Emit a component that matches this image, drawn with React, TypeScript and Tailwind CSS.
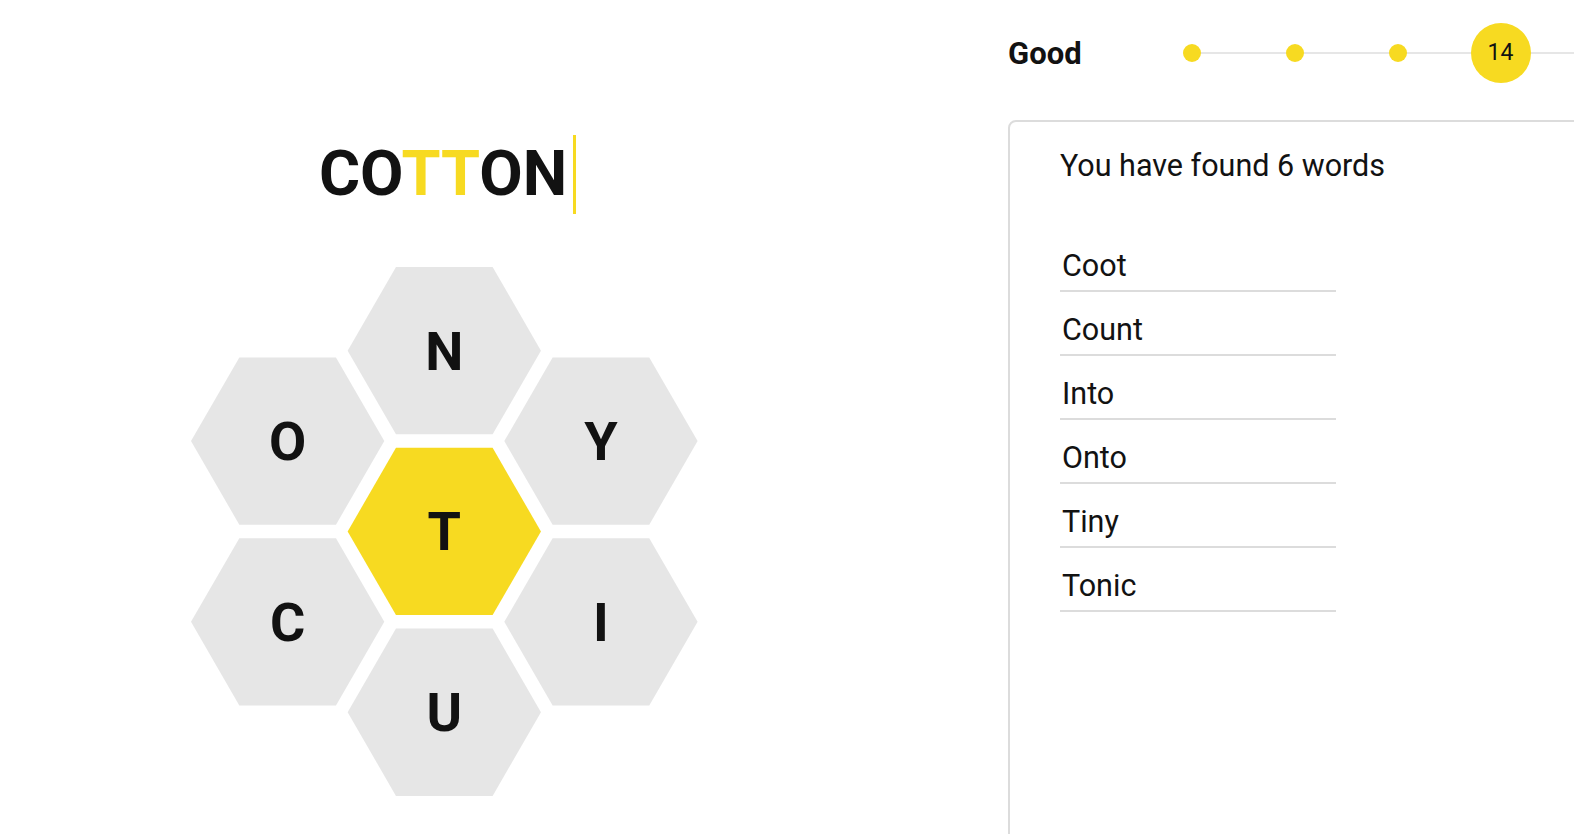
import React from "react";

const W = 193.3;
const H = 167.3;

type Cell = { letter: string; cx: number; cy: number; center?: boolean };

const cells: Cell[] = [
  { letter: "N", cx: 253.3, cy: 83.65 },
  { letter: "O", cx: 96.65, cy: 174.05 },
  { letter: "Y", cx: 409.95, cy: 174.05 },
  { letter: "T", cx: 253.3, cy: 264.45, center: true },
  { letter: "C", cx: 96.65, cy: 354.85 },
  { letter: "I", cx: 409.95, cy: 354.85 },
  { letter: "U", cx: 253.3, cy: 445.25 },
];

const words = ["Coot", "Count", "Into", "Onto", "Tiny", "Tonic"];

function hexPoints(cx: number, cy: number) {
  const pts = [
    [cx - W / 2, cy],
    [cx - W / 4, cy - H / 2],
    [cx + W / 4, cy - H / 2],
    [cx + W / 2, cy],
    [cx + W / 4, cy + H / 2],
    [cx - W / 4, cy + H / 2],
  ];
  return pts.map((p) => p.join(",")).join(" ");
}

function Hive() {
  return (
    <svg width="507" height="530" viewBox="0 0 507 530" className="block">
      {cells.map((c) => (
        <g key={c.letter}>
          <polygon points={hexPoints(c.cx, c.cy)} fill={c.center ? "#f7da21" : "#e6e6e6"} />
          <text
            x={c.cx}
            y={c.cy + 19}
            textAnchor="middle"
            fontFamily="Roboto, 'Liberation Sans', sans-serif"
            fontWeight={700}
            fontSize={54}
            fill="#121212"
          >
            {c.letter}
          </text>
        </g>
      ))}
    </svg>
  );
}

function Progress() {
  return (
    <div className="flex items-center h-[60px]">
      <div className="w-[132px] text-[31px] font-bold leading-none text-[#121212]">Good</div>
      <div className="relative flex items-center h-[60px]">
        <div className="absolute left-[51px] top-[29px] h-[2px] w-[500px] bg-[#e6e6e6]" />
        {[0, 1, 2].map((i) => (
          <div key={i} className="relative w-[103px] flex justify-center">
            <div className="w-[18px] h-[18px] rounded-full bg-[#f7da21]" />
          </div>
        ))}
        <div className="relative w-[103px] flex justify-center">
          <div className="w-[60px] h-[60px] rounded-full bg-[#f7da21] flex items-center justify-center text-[23px] text-[#121212]">
            14
          </div>
        </div>
      </div>
    </div>
  );
}

export default function App() {
  return (
    <div
      className="w-[1574px] h-[834px] overflow-hidden bg-white flex text-[#121212]"
      style={{ fontFamily: "Roboto, 'Liberation Sans', sans-serif" }}
    >
      <div className="w-[888px] shrink-0 flex flex-col items-center pt-[134px]">
        <div className="flex items-center h-[80px] pl-[7px]">
          <span className="text-[63px] font-bold leading-[80px]">
            CO<span className="text-[#f7da21]">TT</span>ON
          </span>
          <span className="ml-[6px] w-[3px] h-[79px] bg-[#f7da21]" />
        </div>
        <div className="mt-[53px]">
          <Hive />
        </div>
      </div>

      <div className="ml-[120px] w-[700px] shrink-0 flex flex-col pt-[23px]">
        <Progress />
        <div className="mt-[37px] h-[800px] shrink-0 border-2 border-[#dcdcdc] rounded-lg pl-[50px] pt-[26px]">
          <div className="text-[30.5px] leading-[36px]">You have found 6 words</div>
          <ul className="mt-[44px] w-[276px]">
            {words.map((w) => (
              <li
                key={w}
                className="pt-[20px] pb-[6px] pl-[2px] text-[30.5px] leading-[36px] border-b-2 border-[#dcdcdc]"
              >
                {w}
              </li>
            ))}
          </ul>
        </div>
      </div>
    </div>
  );
}
